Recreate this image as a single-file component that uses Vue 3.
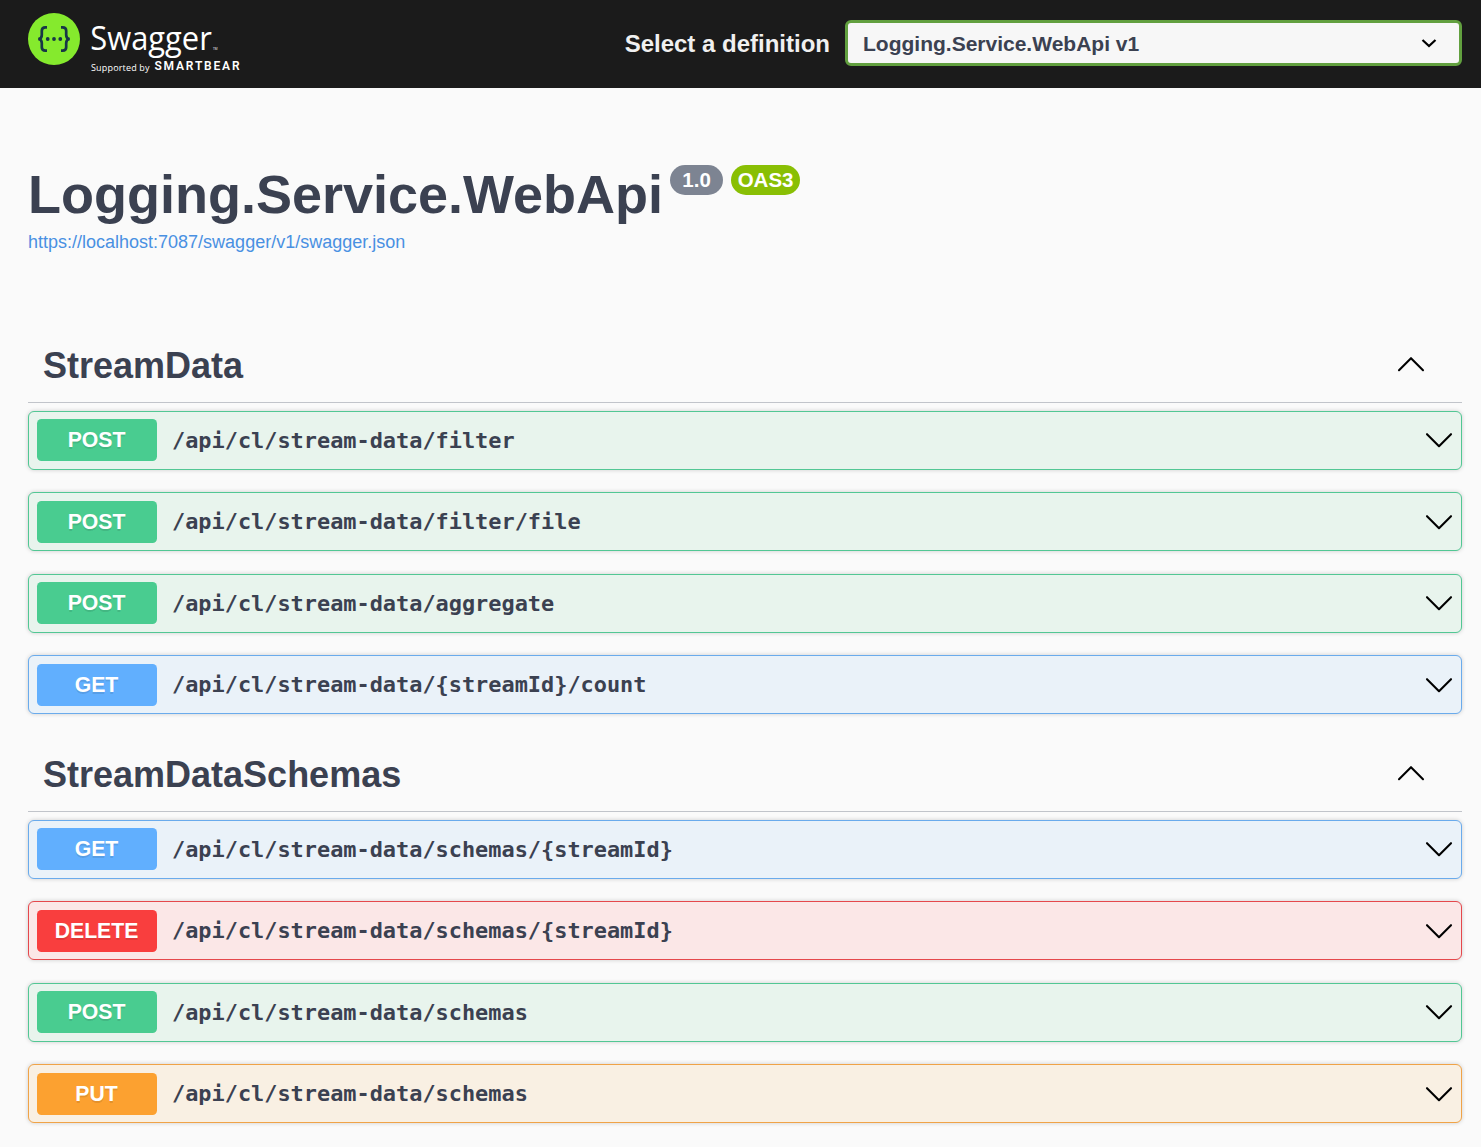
<script setup>
const sections = [
  {
    name: 'StreamData',
    operations: [
      { method: 'POST', path: '/api/cl/stream-data/filter' },
      { method: 'POST', path: '/api/cl/stream-data/filter/file' },
      { method: 'POST', path: '/api/cl/stream-data/aggregate' },
      { method: 'GET', path: '/api/cl/stream-data/{streamId}/count' },
    ],
  },
  {
    name: 'StreamDataSchemas',
    operations: [
      { method: 'GET', path: '/api/cl/stream-data/schemas/{streamId}' },
      { method: 'DELETE', path: '/api/cl/stream-data/schemas/{streamId}' },
      { method: 'POST', path: '/api/cl/stream-data/schemas' },
      { method: 'PUT', path: '/api/cl/stream-data/schemas' },
    ],
  },
]
</script>

<template>
  <div class="page">
    <header class="topbar">
      <svg class="logo" width="220" height="76" viewBox="0 0 220 76">
        <circle cx="26" cy="33" r="26" fill="#85ea2d" />
        <g fill="none" stroke="#173647" stroke-width="2.7">
          <path d="M19 21.3h-1.6c-2.6 0-3.6 1.2-3.6 3.4v4.2c0 2.6-.9 4-3.6 4.1 2.7 .1 3.6 1.5 3.6 4.1v4.2c0 2.2 1 3.4 3.6 3.4h1.6" />
          <path d="M33 21.3h1.6c2.6 0 3.6 1.2 3.6 3.4v4.2c0 2.6 .9 4 3.6 4.1-2.7 .1-3.6 1.5-3.6 4.1v4.2c0 2.2-1 3.4-3.6 3.4h-1.6" />
        </g>
        <g fill="#173647">
          <circle cx="19.7" cy="33" r="1.9" />
          <circle cx="26" cy="33" r="1.9" />
          <circle cx="32.3" cy="33" r="1.9" />
        </g>
        <g fill="#fff">
          <text class="word" x="62.3" y="43.5" textLength="121.5" lengthAdjust="spacingAndGlyphs">Swagger</text>
          <text class="tm" x="185" y="43.500" textLength="4.500" lengthAdjust="spacingAndGlyphs">TM</text>
          <text class="support" x="63" y="64.500" textLength="58.500" lengthAdjust="spacing">Supported by</text>
          <text class="bear" x="126.500" y="64" textLength="85" lengthAdjust="spacing">SMARTBEAR</text>
        </g>
      </svg>
      <label class="definition">
        <span class="caption">Select a definition</span>
        <span class="select">
          <span class="caption">Logging.Service.WebApi v1</span>
          <svg width="16" height="10" viewBox="0 0 16 10">
            <path d="M1.5 2 8 8.1 14.5 2" fill="none" stroke="#000" stroke-width="2.2" />
          </svg>
        </span>
      </label>
    </header>

    <main class="content">
      <div class="title-row">
        <h1>Logging.Service.WebApi</h1>
        <span class="badge version">1.0</span>
        <span class="badge oas">OAS3</span>
      </div>
      <a class="spec">https://localhost:7087/swagger/v1/swagger.json</a>

      <section v-for="s in sections" :key="s.name">
        <div class="tag">
          <h2>{{ s.name }}</h2>
          <svg class="chevron" width="28" height="16" viewBox="0 0 28 16">
            <path d="M2 14.2 14 2.200 26 14.2" />
          </svg>
        </div>
        <div class="operations">
          <div v-for="op in s.operations" :key="op.method + op.path" class="op" :class="op.method.toLowerCase()">
            <span class="method">{{ op.method }}</span>
            <span class="path">{{ op.path }}</span>
            <svg class="chevron" width="28" height="16" viewBox="0 0 28 16">
              <path d="M2 2.2 14 14.2 26 2.2" />
            </svg>
          </div>
        </div>
      </section>
    </main>
  </div>
</template>

<style>
body {
  background: #fafafa;
}
</style>

<style scoped>
.page {
  height: 1147px;
  overflow: hidden;
  background: #fafafa;
  color: #3b4151;
  font-family: "Liberation Sans", Arial, sans-serif;
}
.topbar {
  display: flex;
  align-items: flex-start;
  justify-content: space-between;
  box-sizing: border-box;
  height: 88px;
  padding: 6px 19px 0 28px;
  background: #1b1b1b;
}
.logo text {
  font-family: "Open Sans", sans-serif;
}
.logo .word {
  font-size: 33px;
  font-weight: 400;
}
.logo .tm {
  font-size: 3px;
}
.logo .support {
  font-size: 9px;
}
.logo .bear {
  font-family: "Roboto", sans-serif;
  font-size: 12px;
  font-weight: 600;
}
.definition {
  display: flex;
  align-items: center;
  gap: 15px;
  margin-top: 14px;
  color: #f0f0f0;
  font-size: 24px;
  font-weight: 700;
}
.caption {
  padding-top: 2px;
}
.select {
  display: flex;
  align-items: center;
  justify-content: space-between;
  box-sizing: border-box;
  width: 617px;
  height: 46px;
  padding: 0 22px 0 15px;
  border: 3px solid #62a03f;
  border-radius: 6px;
  background: #f7f7f7;
  color: #3b4151;
  font-size: 21px;
}
.content {
  padding: 75px 19px 0 28px;
}
.title-row {
  display: flex;
  align-items: flex-start;
  height: 66px;
}
h1 {
  margin: 0;
  font-size: 54px;
  line-height: 62px;
}
.badge {
  box-sizing: border-box;
  height: 30px;
  margin-top: 2px;
  border-radius: 15px;
  color: #fff;
  font-size: 20.5px;
  font-weight: 700;
  line-height: 30px;
  text-align: center;
}
.version {
  width: 53px;
  margin-left: 7px;
  background: #7d8492;
}
.oas {
  width: 69px;
  margin-left: 8px;
  background: #89bf04;
}
.spec {
  display: block;
  height: 26px;
  color: #4990e2;
  font-size: 18px;
  line-height: 26px;
}
.tag {
  display: flex;
  align-items: center;
  justify-content: space-between;
  box-sizing: border-box;
  height: 75px;
  padding: 0 37px 0 15px;
  border-bottom: 1px solid #c1c4ca;
}
.tag .chevron {
  margin-bottom: 2px;
}
.spec + section {
  margin-top: 73px;
}
section + section {
  margin-top: 22.5px;
}
h2 {
  margin: 0;
  padding-top: 2px;
  font-size: 36px;
}
.chevron {
  flex: none;
  fill: none;
  stroke: #000;
  stroke-width: 2.1;
  stroke-linecap: round;
  stroke-linejoin: round;
}
.operations {
  display: flex;
  flex-direction: column;
  gap: 22.5px;
  padding-top: 7.9px;
}
.op {
  display: flex;
  align-items: center;
  box-sizing: border-box;
  height: 59px;
  padding: 7.25px 8px 7.75px;
  border: 1px solid;
  border-radius: 6px;
  box-shadow: 0 0 4px rgba(0, 0, 0, 0.19);
}
.op .chevron {
  margin-left: auto;
}
.method {
  box-sizing: border-box;
  width: 120px;
  height: 42px;
  padding-right: 1px;
  border-radius: 4.5px;
  color: #fff;
  font-size: 21.2px;
  font-weight: 700;
  line-height: 42.5px;
  text-align: center;
  text-shadow: 0 1.5px 0 rgba(0, 0, 0, 0.1);
}
.path {
  margin-left: 15px;
  padding-top: 0.5px;
  font-family: "DejaVu Sans Mono", monospace;
  font-size: 21.9px;
  font-weight: 700;
}
.post {
  border-color: #52c794;
  background: #e8f4ed;
}
.post .method {
  background: #49cc90;
}
.get {
  border-color: #6aabec;
  background: #eaf2f9;
}
.get .method {
  background: #61affe;
}
.delete {
  border-color: #e5484c;
  background: #fbe7e7;
}
.delete .method {
  background: #f93e3e;
}
.put {
  border-color: #f0a347;
  background: #f9f0e3;
}
.put .method {
  background: #fca130;
}
</style>
